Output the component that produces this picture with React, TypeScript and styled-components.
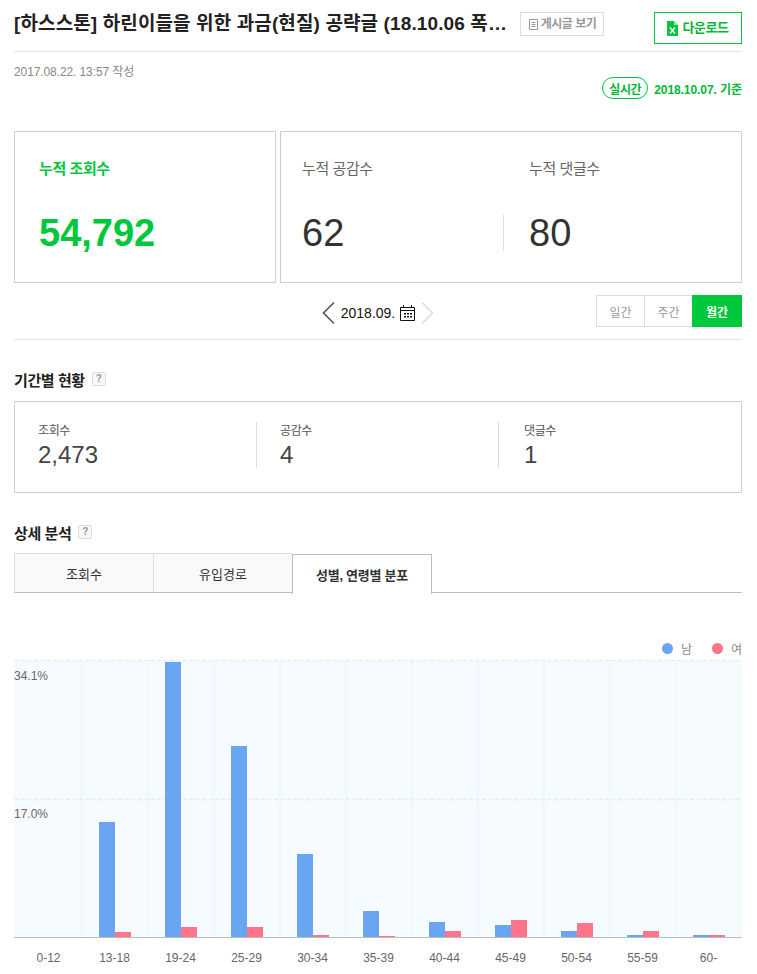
import React from "react";
import styled, { createGlobalStyle } from "styled-components";

const Global = createGlobalStyle`
  html, body { margin: 0; padding: 0; background: #fff; }
  body { font-family: "Liberation Sans", "Noto Sans CJK KR", sans-serif; color: #222; overflow: hidden; }
  * { box-sizing: border-box; }
`;

const Page = styled.div`
  width: 757px;
  height: 974px;
  padding: 0 15px 0 14px;
  overflow: hidden;
`;

const Header = styled.header`
  height: 52px;
  border-bottom: 1px solid #e2e2e2;
  display: flex;
  align-items: flex-start;
`;
const Title = styled.h1`
  margin: 10px 0 0;
  width: 492px;
  font-size: 19px;
  line-height: 28px;
  font-weight: 700;
  letter-spacing: 0.12px;
  color: #222;
  white-space: nowrap;
`;
const ViewPost = styled.button`
  margin: 12px 0 0 14px;
  width: 84px;
  height: 24px;
  border: 1px solid #dcdcdc;
  background: #fff;
  color: #999;
  font: 700 12px/20px "Liberation Sans", "Noto Sans CJK KR", sans-serif;
  letter-spacing: -0.5px;
  display: flex;
  align-items: center;
  justify-content: center;
  gap: 2px;
  padding: 0;
`;
const Download = styled.button`
  margin: 12px 0 0 50px;
  width: 88px;
  height: 32px;
  border: 1px solid #00c73c;
  background: #fff;
  color: #00b837;
  font: 700 13px/20px "Liberation Sans", "Noto Sans CJK KR", sans-serif;
  letter-spacing: -0.4px;
  display: flex;
  align-items: center;
  justify-content: center;
  gap: 4px;
  padding: 0;
`;

const MetaRow = styled.div`
  height: 79px;
`;
const Created = styled.div`
  padding-top: 12px;
  font-size: 12px;
  line-height: 16px;
  letter-spacing: -0.1px;
  color: #888;
`;
const Basis = styled.div`
  display: flex;
  justify-content: flex-end;
  align-items: center;
  gap: 6px;
  margin-top: -3px;
  font-size: 12px;
  font-weight: 700;
  letter-spacing: -0.07px;
  color: #00b837;
`;
const Live = styled.span`
  width: 46px;
  height: 22px;
  border: 1px solid #00c73c;
  border-radius: 11px;
  display: flex;
  align-items: center;
  justify-content: center;
  font-size: 12px;
  letter-spacing: -0.5px;
`;

const Cards = styled.section`
  display: flex;
  gap: 4px;
  height: 152px;
`;
const Card = styled.div<{ $w: number; $pad: number }>`
  width: ${(p) => p.$w}px;
  border: 1px solid #cfcfcf;
  padding: 25px ${(p) => p.$pad}px 0;
  display: flex;
`;
const StatCol = styled.div<{ $w?: number }>`
  width: ${(p) => (p.$w ? `${p.$w}px` : "auto")};
  position: relative;
`;
const CardLabel = styled.div<{ $green?: boolean }>`
  font-size: 15px;
  line-height: 24px;
  letter-spacing: -0.4px;
  font-weight: ${(p) => (p.$green ? 700 : 400)};
  color: ${(p) => (p.$green ? "#00c73c" : "#666")};
`;
const CardValue = styled.div<{ $green?: boolean }>`
  margin-top: 30px;
  font-size: 38px;
  line-height: 44px;
  font-weight: ${(p) => (p.$green ? 700 : 400)};
  color: ${(p) => (p.$green ? "#00c73c" : "#333")};
`;
const CardRule = styled.i`
  position: absolute;
  right: 25px;
  top: 58px;
  height: 36px;
  width: 1px;
  background: #ddd;
`;

const DateBar = styled.div`
  height: 57px;
  border-bottom: 1px solid #e2e2e2;
  display: grid;
  grid-template-columns: 1fr auto 1fr;
  align-items: start;
`;
const DateNav = styled.div`
  grid-column: 2;
  margin-top: 18px;
  margin-left: 0;
  display: flex;
  align-items: center;
  height: 24px;
  gap: 5px;
  font-size: 14px;
  color: #111;
`;
const Segments = styled.div`
  grid-column: 3;
  justify-self: end;
  margin-top: 12px;
  display: flex;
`;
const Segment = styled.div<{ $on?: boolean }>`
  width: ${(p) => (p.$on ? 50 : 48)}px;
  height: 32px;
  border: 1px solid ${(p) => (p.$on ? "#00c73c" : "#ddd")};
  border-right-width: ${(p) => (p.$on ? "1px" : "0")};
  background: ${(p) => (p.$on ? "#00c73c" : "#fff")};
  color: ${(p) => (p.$on ? "#fff" : "#999")};
  font-size: 12px;
  font-weight: ${(p) => (p.$on ? 700 : 400)};
  display: flex;
  align-items: center;
  justify-content: center;
`;

const SectionHead = styled.div`
  margin-top: 29px;
  height: 20px;
  display: flex;
  align-items: center;
  gap: 7px;
  font-size: 15px;
  font-weight: 700;
  letter-spacing: -0.4px;
  color: #222;
`;
const Help = styled.span`
  width: 14px;
  height: 14px;
  border: 1px solid #ddd;
  border-radius: 2px;
  background: #f8f8f8;
  color: #999;
  font-size: 10px;
  line-height: 12px;
  text-align: center;
  font-weight: 700;
  letter-spacing: 0;
`;

const PeriodBox = styled.section`
  margin-top: 12px;
  height: 92px;
  border: 1px solid #cfcfcf;
  padding: 20px 0 0 23px;
  display: grid;
  grid-template-columns: 242px 242px 1fr;
`;
const PeriodItem = styled.div<{ $rule?: boolean; $shift?: number }>`
  height: 46px;
  width: ${(p) => (p.$rule ? "219px" : "auto")};
  border-right: ${(p) => (p.$rule ? "1px solid #ddd" : "0")};
  padding-left: ${(p) => p.$shift ?? 0}px;
`;
const PeriodLabel = styled.div`
  padding-top: 1px;
  font-size: 12px;
  line-height: 16px;
  letter-spacing: -0.4px;
  color: #555;
`;
const PeriodValue = styled.div`
  padding-top: 1px;
  font-size: 24px;
  line-height: 30px;
  color: #444;
`;

const Tabs = styled.div`
  margin-top: 11px;
  height: 40px;
  display: flex;
  border-bottom: 1px solid #bdbdbd;
`;
const Tab = styled.div<{ $on?: boolean; $w: number }>`
  width: ${(p) => p.$w}px;
  height: ${(p) => (p.$on ? "40px" : "39px")};
  background: ${(p) => (p.$on ? "#fff" : "#f9f9f9")};
  border: 1px solid ${(p) => (p.$on ? "#bdbdbd" : "#ddd")};
  border-bottom: 0;
  border-right-width: ${(p) => (p.$on ? "1px" : "0")};
  color: #333;
  font-size: 13px;
  font-weight: ${(p) => (p.$on ? 700 : 400)};
  letter-spacing: ${(p) => (p.$on ? "-0.25px" : "0")};
  display: flex;
  align-items: center;
  justify-content: center;
  position: relative;
  top: ${(p) => (p.$on ? "1px" : "0")};
`;

const Legend = styled.div`
  margin-top: 44px;
  height: 22px;
  display: flex;
  justify-content: flex-end;
  align-items: center;
  font-size: 12px;
  color: #888;
`;
const LegendItem = styled.span<{ $c: string; $gap: number }>`
  display: flex;
  align-items: center;
  margin-left: ${(p) => p.$gap}px;
  gap: 8px;
  &::before {
    content: "";
    width: 11px;
    height: 11px;
    border-radius: 50%;
    background: ${(p) => p.$c};
  }
`;

const Chart = styled.section`
  position: relative;
  width: 728px;
`;
const Plot = styled.svg`
  display: block;
`;
const YLabel = styled.span<{ $top: number }>`
  position: absolute;
  left: 0;
  top: ${(p) => p.$top}px;
  font-size: 12px;
  line-height: 14px;
  color: #666;
`;
const XAxis = styled.div`
  display: grid;
  grid-template-columns: repeat(11, 66px);
  margin-top: 11px;
  font-size: 12px;
  line-height: 16px;
  color: #666;
`;
const XTick = styled.span`
  text-align: center;
  width: 69px;
`;

const data: [string, number, number][] = [
  ["0-12", 937, 937],
  ["13-18", 822, 932],
  ["19-24", 662, 927],
  ["25-29", 746, 927],
  ["30-34", 854, 935],
  ["35-39", 911, 936],
  ["40-44", 922, 931],
  ["45-49", 925, 920],
  ["50-54", 931, 923],
  ["55-59", 935, 931],
  ["60-", 935, 935],
];
const seps = [81, 147, 213, 279, 345, 411, 477, 543, 609, 675];
const Y0 = 659;

export default function App() {
  return (
    <Page>
      <Global />
      <Header>
        <Title>[하스스톤] 하린이들을 위한 과금(현질) 공략글 (18.10.06 폭…</Title>
        <ViewPost>
          <svg width="11" height="11" viewBox="0 0 11 11" fill="none" stroke="#999">
            <path d="M1.5.5h8v10h-8zM3.5 3.5h4M3.5 5.5h4M3.5 7.5h4" />
          </svg>
          게시글 보기
        </ViewPost>
        <Download>
          <svg width="11" height="15" viewBox="0 0 11 15">
            <path d="M0 0h7l4 4v11H0z" fill="#00c73c" />
            <path d="M7 0l4 4H7z" fill="#9be8b3" />
            <path d="M3 6.500l5 6M8 6.500l-5 6" stroke="#fff" strokeWidth="1.400" fill="none" />
          </svg>
          다운로드
        </Download>
      </Header>
      <MetaRow>
        <Created>2017.08.22. 13:57 작성</Created>
        <Basis>
          <Live>실시간</Live>
          2018.10.07. 기준
        </Basis>
      </MetaRow>
      <Cards>
        <Card $w={262} $pad={24}>
          <StatCol>
            <CardLabel $green>누적 조회수</CardLabel>
            <CardValue $green>54,792</CardValue>
          </StatCol>
        </Card>
        <Card $w={462} $pad={21}>
          <StatCol $w={227}>
            <CardLabel>누적 공감수</CardLabel>
            <CardValue>62</CardValue>
            <CardRule />
          </StatCol>
          <StatCol>
            <CardLabel>누적 댓글수</CardLabel>
            <CardValue>80</CardValue>
          </StatCol>
        </Card>
      </Cards>
      <DateBar>
        <DateNav>
          <svg width="15" height="24" viewBox="0 0 15 24" fill="none" stroke="#555" strokeWidth="1.600">
            <path d="M13 1.500L2.500 12 13 22.500" />
          </svg>
          2018.09.
          <svg width="15" height="16" viewBox="0 0 15 16" fill="none" stroke="#111">
            <path d="M.5 2.500h14v13H.5zM.5 5.500h14M3.500 0v3M11.500 0v3" />
            <path d="M4 8h2v1.500H4zM7 8h2v1.500H7zM10 8h2v1.500h-2zM4 11h2v1.500H4zM7 11h2v1.500H7zM10 11h2v1.500h-2z" fill="#111" stroke="none" />
          </svg>
          <svg width="15" height="24" viewBox="0 0 15 24" fill="none" stroke="#ddd" strokeWidth="1.600">
            <path d="M2 1.500L12.500 12 2 22.500" />
          </svg>
        </DateNav>
        <Segments>
          <Segment>일간</Segment>
          <Segment>주간</Segment>
          <Segment $on>월간</Segment>
        </Segments>
      </DateBar>
      <SectionHead>
        기간별 현황 <Help>?</Help>
      </SectionHead>
      <PeriodBox>
        <PeriodItem $rule>
          <PeriodLabel>조회수</PeriodLabel>
          <PeriodValue>2,473</PeriodValue>
        </PeriodItem>
        <PeriodItem $rule>
          <PeriodLabel>공감수</PeriodLabel>
          <PeriodValue>4</PeriodValue>
        </PeriodItem>
        <PeriodItem $shift={2}>
          <PeriodLabel>댓글수</PeriodLabel>
          <PeriodValue>1</PeriodValue>
        </PeriodItem>
      </PeriodBox>
      <SectionHead>
        상세 분석 <Help>?</Help>
      </SectionHead>
      <Tabs>
        <Tab $w={139}>조회수</Tab>
        <Tab $w={139}>유입경로</Tab>
        <Tab $w={140} $on>성별, 연령별 분포</Tab>
      </Tabs>
      <Legend>
        <LegendItem $c="#68a6f2" $gap={0}>남</LegendItem>
        <LegendItem $c="#ff7488" $gap={20}>여</LegendItem>
      </Legend>
      <Chart>
        <Plot width="728" height="280" viewBox="14 659 728 280">
          <rect x="14" y="660" width="728" height="277" fill="#f6fbff" />
          {seps.map((x) => (
            <rect key={x} x={x} y={660} width={2} height={277} fill="#eff6fd" />
          ))}
          <path d="M14 660.500H742M14 799.500H742" stroke="#e3edf4" strokeWidth="1.500" strokeDasharray="4 2.500" />
          {data.map(([k, b, r], i) => (
            <g key={k}>
              <rect x={33 + 66 * i} y={b} width={16} height={937 - b} fill="#68a6f2" />
              <rect x={49 + 66 * i} y={r} width={16} height={937 - r} fill="#ff7488" />
            </g>
          ))}
          <rect x="14" y="937" width="728" height="1" fill="#bdbdbd" />
        </Plot>
        <YLabel $top={669 - Y0}>34.1%</YLabel>
        <YLabel $top={807 - Y0}>17.0%</YLabel>
        <XAxis>
          {data.map(([k]) => (
            <XTick key={k}>{k}</XTick>
          ))}
        </XAxis>
      </Chart>
    </Page>
  );
}
